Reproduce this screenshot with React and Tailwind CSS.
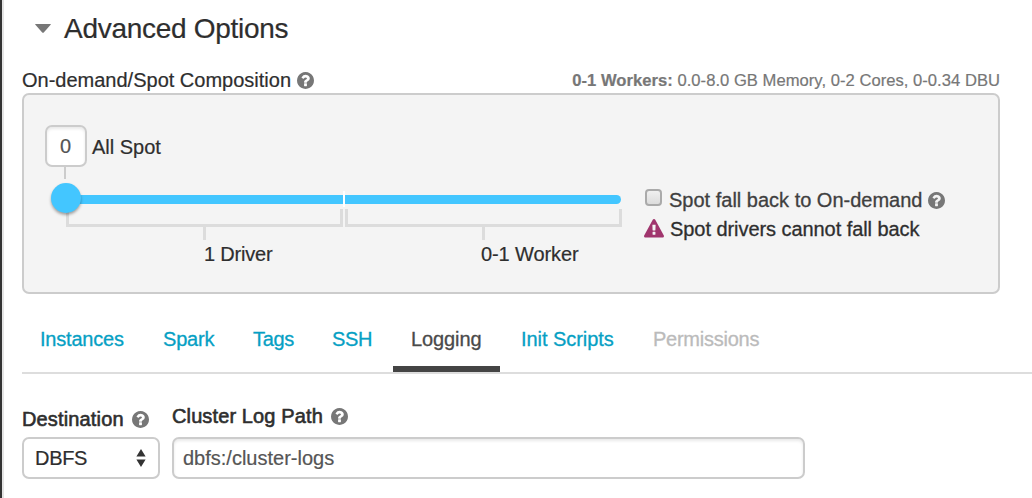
function HelpIcon({ className = '' }) {
  return (
    <svg viewBox="128 128 1536 1536" className={`mt-1 h-[17px] w-[17px] shrink-0 fill-[#777] ${className}`}>
      <path d="M1024 1376v-192q0-14-9-23t-23-9h-192q-14 0-23 9t-9 23v192q0 14 9 23t23 9h192q14 0 23-9t9-23zM1280 704q0-88-55.5-163t-138.5-116-170-41q-243 0-371 213-15 24 8 42l132 100q7 6 19 6 16 0 25-12 53-68 86-92 34-24 86-24 48 0 85.5 26t37.5 59q0 38-20 61t-68 45q-63 28-115.5 86.5t-52.5 125.5v36q0 14 9 23t23 9h192q14 0 23-9t9-23q0-19 21.5-49.5t54.5-49.5q32-18 49-28.5t46-35 44.5-48 28-60.5 12.5-81zM1664 896q0 209-103 385.5t-279.5 279.5-385.5 103-385.5-103-279.5-279.5-103-385.5 103-385.5 279.5-279.5 385.5-103 385.5 103 279.5 279.5 103 385.5z" />
    </svg>
  );
}

function WarningIcon() {
  return (
    <svg viewBox="0 0 1792 1792" className="-mt-px -ml-px h-5 w-5 shrink-0 fill-[#a0356d]">
      <path d="M1024 1375v-190q0-14-9.5-23.5t-22.5-9.5h-192q-13 0-22.5 9.5t-9.5 23.5v190q0 14 9.5 23.5t22.5 9.5h192q13 0 22.5-9.5t9.5-23.5zm-2-374l18-459q0-12-10-19-13-11-24-11h-220q-11 0-24 11-10 7-10 21l17 457q0 10 10 16.5t24 6.5h185q14 0 23.5-6.5t10.5-16.5zm-14-934l768 1408q35 63-2 126-17 29-46.5 46t-63.5 17h-1536q-34 0-63.5-17t-46.5-46q-37-63-2-126l768-1408q17-31 47-49t65-18 65 18 47 49z" />
    </svg>
  );
}

function Bracket({ label, className, labelClass }) {
  return (
    <div className={`flex flex-col items-start ${className}`}>
      <div className="h-[18px] w-full border-x-3 border-b-3 border-[#dcdcdc]" />
      <div className="ml-[137px] h-[13px] w-[3px] bg-[#dcdcdc]" />
      <div className={`mt-[2px] leading-6 whitespace-nowrap ${labelClass}`}>{label}</div>
    </div>
  );
}

const tabs = [
  { name: 'Instances', width: 'w-[123px] pl-[18px] tracking-[-0.2px]' },
  { name: 'Spark', width: 'w-[91px] pl-[18px] tracking-[-0.2px]' },
  { name: 'Tags', width: 'w-[79px] pl-[17px] tracking-[-0.3px]' },
  { name: 'SSH', width: 'w-[78px] pl-[17px] tracking-[-0.4px]' },
  { name: 'Logging', width: 'w-[107px] mr-[3px] pl-[18px] tracking-[-0.1px]', active: true },
  { name: 'Init Scripts', width: 'w-[133px] pl-[18px] tracking-[-0.05px]' },
  { name: 'Permissions', width: 'w-[143px] pl-[17px] tracking-[-0.25px]', disabled: true },
];

function tabColor(tab) {
  if (tab.active) return 'text-[#4a4a4a] border-[#444]';
  if (tab.disabled) return 'text-[#bbb] border-transparent';
  return 'text-[#06a0c4] border-transparent';
}

export default function App() {
  return (
    <div className="flex h-[498px] w-[1032px] overflow-hidden bg-white font-['Liberation_Sans',Arial,sans-serif] text-[20px] leading-6 text-[#2e2e2e] [-webkit-text-stroke:0.2px_currentColor]">
      <div className="w-1 shrink-0 border-r-2 border-[#e4e4e4] bg-[#333]" />
      <main className="flex min-w-0 flex-1 flex-col pl-[18px]">
        <header className="mt-3 flex h-8 items-center">
          <svg viewBox="0 0 16 9" className="ml-[13px] h-[9px] w-4 fill-[#777]">
            <path d="M0.6 0h14.8q.8 0 .2.7L9 8.3q-1 1-2 0L.4.7Q-.2 0 .6 0z" />
          </svg>
          <h1 className="mt-[2px] ml-[13px] text-[28px] leading-8 tracking-[-0.28px]">Advanced Options</h1>
        </header>

        <div className="mt-6 mr-8 flex h-[25px] justify-between">
          <div className="flex items-start">
            <span>On-demand/Spot Composition</span>
            <HelpIcon className="ml-[6px]" />
          </div>
          <div className="pt-px text-[16.6px] leading-6 tracking-[0.025px] text-[#777]">
            <b>0-1 Workers:</b> 0.0-8.0 GB Memory, 0-2 Cores, 0-0.34 DBU
          </div>
        </div>

        <section className="mr-8 flex h-[201px] rounded-[7px] border-2 border-[#ccc] bg-[#f4f4f4]">
          <div className="ml-[21px] flex w-[600px] flex-col pt-[30px]">
            <div className="flex items-center">
              <div className="flex h-[42px] w-[42px] items-center justify-center rounded-[7px] border-2 border-[#ccc] bg-white pr-px text-[#555] shadow-[inset_0_2px_3px_rgba(0,0,0,0.09)]">
                0
              </div>
              <span className="ml-[5px] pt-[2px]">All Spot</span>
            </div>
            <div className="ml-[19px] h-3 w-[2px] bg-[#ccc]" />
            <div className="relative mt-3 ml-[21px] flex h-4 w-[555px] items-center">
              <div className="h-[9px] w-[277px] bg-[#43c6ff]" />
              <div className="h-4 w-[2px] bg-white" />
              <div className="h-[9px] w-[276px] rounded-r-[5px] bg-[#43c6ff]" />
              <div className="absolute top-[-8px] left-[-15px] h-[30px] w-[30px] rounded-full bg-[#43c6ff] shadow-[0_2px_3px_rgba(0,0,0,0.35)]" />
            </div>
            <div className="mt-[2px] ml-[21px] flex gap-[2px]">
              <Bracket label="1 Driver" className="w-[277px]" labelClass="ml-[138px] tracking-[-0.2px]" />
              <Bracket label="0-1 Worker" className="w-[277px]" labelClass="ml-[136px] tracking-[-0.1px]" />
            </div>
          </div>

          <div className="flex flex-col gap-[5px] pt-[93px] [-webkit-text-stroke:0.3px_currentColor]">
            <div className="flex h-6 items-start text-[#3f3f3f]">
              <div className="mt-px h-[17px] w-[17px] rounded-[4px] border-2 border-[#aaa] bg-linear-to-b from-[#f0f0f0] to-[#dcdcdc]" />
              <span className="ml-[7px]">Spot fall back to On-demand</span>
              <HelpIcon className="ml-[6px]" />
            </div>
            <div className="flex h-6 items-center">
              <WarningIcon />
              <span className="ml-[6px] tracking-[-0.06px]">Spot drivers cannot fall back</span>
            </div>
          </div>
        </section>

        <nav className="mt-[33px] flex h-[47px] shrink-0 border-b-2 border-[#ddd]">
          {tabs.map((tab) => (
            <div
              key={tab.name}
              className={`h-[45px] shrink-0 border-b-6 whitespace-nowrap [-webkit-text-stroke:0.3px_currentColor] ${tab.width} ${tabColor(tab)}`}
            >
              {tab.name}
            </div>
          ))}
        </nav>

        <div className="mt-[30px] flex gap-3">
          <div className="flex w-[138px] flex-col">
            <div className="flex h-[33px] items-start pt-[3px] tracking-[0.15px] [-webkit-text-stroke:0.6px_currentColor]">
              <span>Destination</span>
              <HelpIcon className="ml-2" />
            </div>
            <div className="flex h-[42px] items-center justify-between rounded-[7px] border-2 border-[#ccc] pr-3 pl-[11px]">
              <span className="tracking-[-0.3px]">DBFS</span>
              <svg viewBox="0 0 10 18" className="h-[18px] w-[10px] fill-[#333]">
                <path d="M5 0l4.6 7.5H.4zM5 18l4.6-7.5H.4z" />
              </svg>
            </div>
          </div>
          <div className="flex w-[633px] flex-col">
            <div className="flex h-[33px] items-start tracking-[0.12px] [-webkit-text-stroke:0.6px_currentColor]">
              <span>Cluster Log Path</span>
              <HelpIcon className="ml-2" />
            </div>
            <div className="flex h-[42px] items-center rounded-[7px] border-2 border-[#ccc] pl-[9px] text-[#555] shadow-[inset_0_2px_3px_rgba(0,0,0,0.09)]">
              dbfs:/cluster-logs
            </div>
          </div>
        </div>
      </main>
    </div>
  );
}
